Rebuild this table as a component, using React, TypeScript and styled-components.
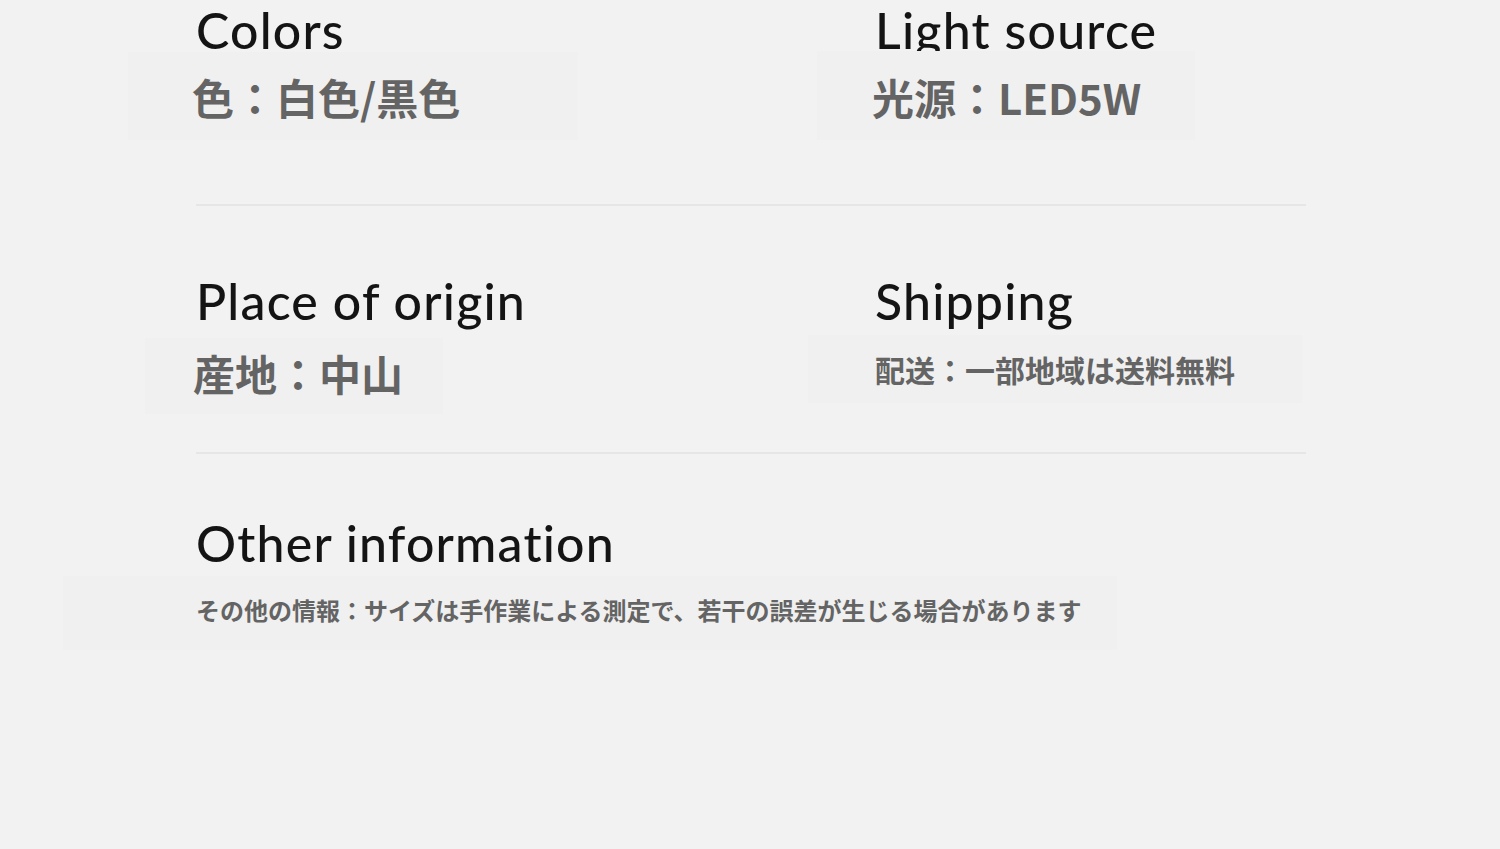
import React from 'react';
import styled, {createGlobalStyle} from 'styled-components';

const GlobalStyle = createGlobalStyle`
  html, body {
    margin: 0;
    padding: 0;
    background: #f2f2f2;
  }
  body {
    min-height: 849px;
    font-family: Lato, 'Noto Sans', sans-serif;
  }
`;

const Page = styled.main`
  width: 1110px;
  padding-left: 196px;
  height: 849px;
  box-sizing: content-box;
  overflow: hidden;
`;

const Row = styled.section<{$top: number; $bottom: number}>`
  display: grid;
  grid-template-columns: 679px 1fr;
  padding-top: ${(p) => p.$top}px;
  padding-bottom: ${(p) => p.$bottom}px;
`;

const Divider = styled.hr`
  margin: 0;
  border: 0;
  height: 2px;
  background: #e6e6e6;
`;

const Cell = styled.div`
  display: flex;
  flex-direction: column;
  align-items: flex-start;
`;

const Heading = styled.h2`
  margin: 0;
  font-family: Lato, 'Noto Sans', sans-serif;
  font-weight: 500;
  font-size: 50px;
  letter-spacing: 1.2px;
  line-height: 1.2;
  color: #141414;
`;

type Patch = {top: number; right: number; bottom: number; left: number};

// the faint retouch patches behind each value in the source picture
const Value = styled.p<{$size: number; $gap: number; $shift?: number; $patch: Patch}>`
  position: relative;
  z-index: 0;
  margin: ${(p) => p.$gap}px 0 0 ${(p) => p.$shift ?? 0}px;
  font-family: 'Noto Sans CJK JP', 'Noto Sans', sans-serif;
  font-weight: 700;
  font-size: ${(p) => p.$size}px;
  line-height: 1.2;
  color: #646464;
  white-space: nowrap;

  &::before {
    content: '';
    position: absolute;
    z-index: -1;
    top: -${(p) => p.$patch.top}px;
    right: -${(p) => p.$patch.right}px;
    bottom: -${(p) => p.$patch.bottom}px;
    left: -${(p) => p.$patch.left}px;
    background: #f0f0f0;
  }
`;

export default function App() {
  return (
    <>
      <GlobalStyle />
      <Page>
        <Row $top={0} $bottom={82}>
          <Cell>
            <Heading>Colors</Heading>
            <Value $size={42} $gap={12} $shift={-4} $patch={{top: 20, right: 118, bottom: 18, left: 64}}>
              色：白色/黒色
            </Value>
          </Cell>
          <Cell>
            <Heading>Light source</Heading>
            <Value $size={42} $gap={12} $shift={-3} $patch={{top: 21, right: 54, bottom: 18, left: 55}}>
              光源：LED5W
            </Value>
          </Cell>
        </Row>
        <Divider />
        <Row $top={65} $bottom={53}>
          <Cell>
            <Heading>Place of origin</Heading>
            <Value $size={42} $gap={17} $shift={-3} $patch={{top: 10, right: 40, bottom: 15, left: 48}}>
              産地：中山
            </Value>
          </Cell>
          <Cell>
            <Heading>Shipping</Heading>
            <Value $size={30} $gap={20} $patch={{top: 16, right: 67, bottom: 16, left: 67}}>
              配送：一部地域は送料無料
            </Value>
          </Cell>
        </Row>
        <Divider />
        <Row $top={59} $bottom={0}>
          <Cell>
            <Heading>Other information</Heading>
            <Value $size={24} $gap={23} $patch={{top: 20, right: 35, bottom: 25, left: 133}}>
              その他の情報：サイズは手作業による測定で、若干の誤差が生じる場合があります
            </Value>
          </Cell>
        </Row>
      </Page>
    </>
  );
}
